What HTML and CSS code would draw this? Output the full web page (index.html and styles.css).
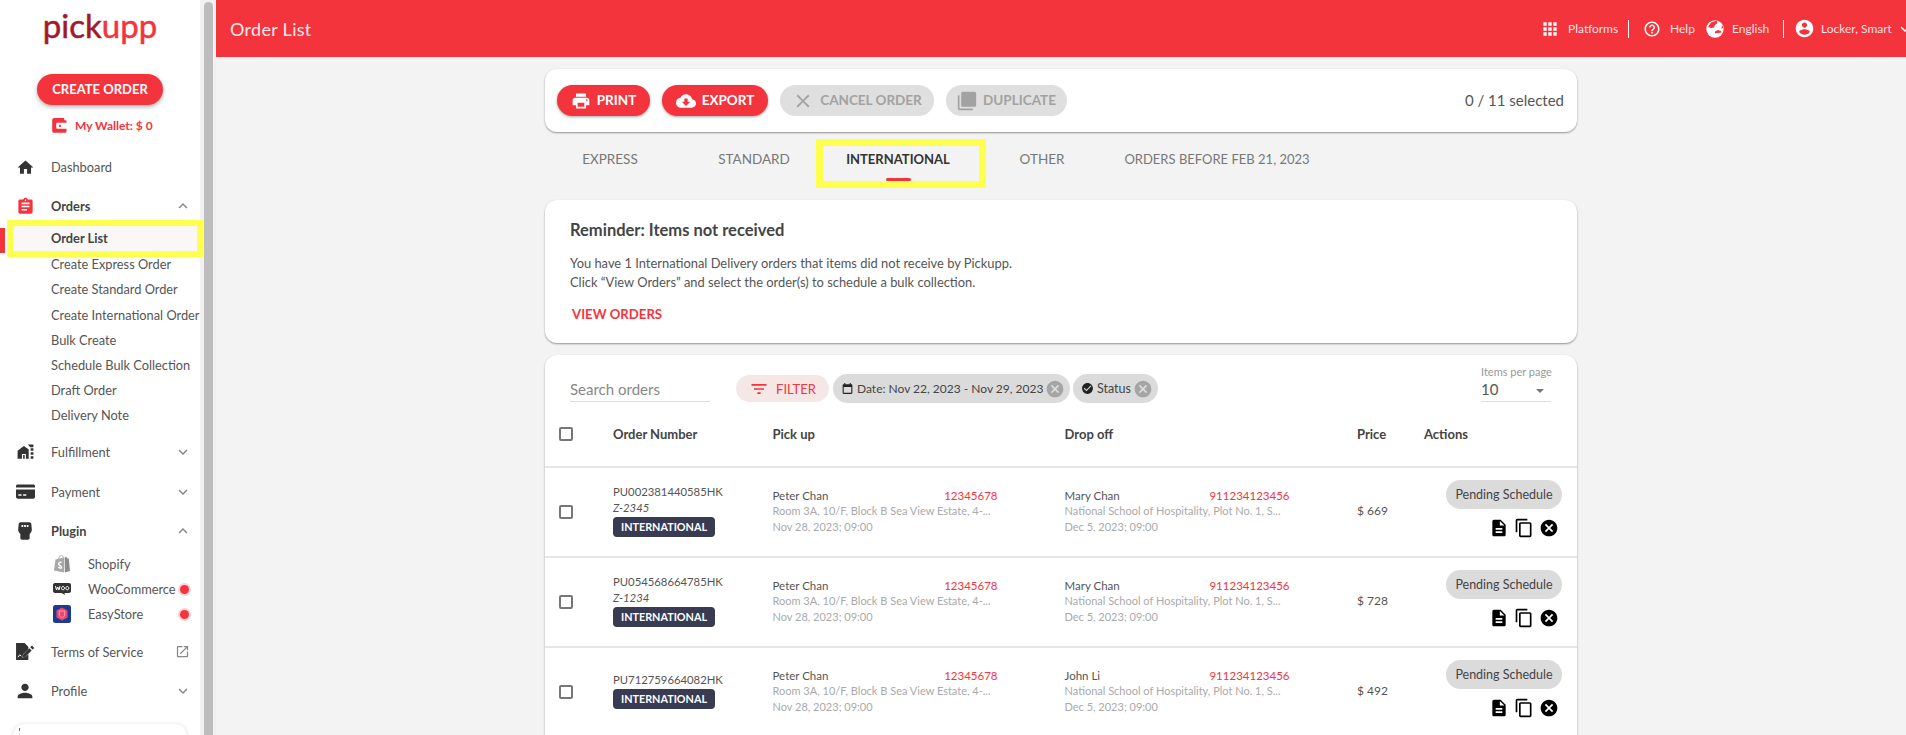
FILE: index.html
```html
<!DOCTYPE html>
<html lang="en">
<head>
<meta charset="utf-8">
<title>Order List</title>
<link rel="stylesheet" href="styles.css">
</head>
<body>
<svg class="defs" aria-hidden="true">
  <symbol id="i-home" viewBox="0 0 24 24"><path d="M10 20v-6h4v6h5v-8h3L12 3 2 12h3v8z"/></symbol>
  <symbol id="i-assign" viewBox="0 0 24 24"><path d="M19 3h-4.18C14.4 1.84 13.3 1 12 1c-1.3 0-2.4.84-2.82 2H5c-1.1 0-2 .9-2 2v14c0 1.1.9 2 2 2h14c1.1 0 2-.9 2-2V5c0-1.1-.9-2-2-2zm-7 0c.55 0 1 .45 1 1s-.45 1-1 1-1-.45-1-1 .45-1 1-1zm2 14H7v-2h7v2zm3-4H7v-2h10v2zm0-4H7V7h10v2z"/></symbol>
  <symbol id="i-up" viewBox="0 0 24 24"><path d="M12 8l-6 6 1.41 1.41L12 10.83l4.59 4.58L18 14z"/></symbol>
  <symbol id="i-down" viewBox="0 0 24 24"><path d="M16.59 8.59L12 13.17 7.41 8.59 6 10l6 6 6-6z"/></symbol>
  <symbol id="i-person" viewBox="0 0 24 24"><path d="M12 12c2.21 0 4-1.79 4-4s-1.79-4-4-4-4 1.79-4 4 1.79 4 4 4zm0 2c-2.67 0-8 1.34-8 4v2h16v-2c0-2.66-5.33-4-8-4z"/></symbol>
  <symbol id="i-open" viewBox="0 0 24 24"><path d="M19 19H5V5h7V3H5c-1.11 0-2 .9-2 2v14c0 1.1.89 2 2 2h14c1.1 0 2-.9 2-2v-7h-2v7zM14 3v2h3.59l-9.83 9.83 1.41 1.41L19 6.41V10h2V3h-7z"/></symbol>
  <symbol id="i-print" viewBox="0 0 24 24"><path d="M19 8H5c-1.66 0-3 1.34-3 3v6h4v4h12v-4h4v-6c0-1.66-1.34-3-3-3zm-3 11H8v-5h8v5zm3-7c-.55 0-1-.45-1-1s.45-1 1-1 1 .45 1 1-.45 1-1 1zm-1-9H6v4h12V3z"/></symbol>
  <symbol id="i-cloud" viewBox="0 0 24 24"><path d="M19.35 10.04C18.67 6.59 15.64 4 12 4 9.11 4 6.6 5.64 5.35 8.04 2.34 8.36 0 10.91 0 14c0 3.31 2.69 6 6 6h13c2.76 0 5-2.24 5-5 0-2.64-2.05-4.78-4.65-4.96zM17 13l-5 5-5-5h3V9h4v4h3z"/></symbol>
  <symbol id="i-close" viewBox="0 0 24 24"><path d="M19 6.41L17.59 5 12 10.59 6.41 5 5 6.41 10.59 12 5 17.59 6.41 19 12 13.41 17.59 19 19 17.59 13.41 12z"/></symbol>
  <symbol id="i-dup" viewBox="0 0 24 24"><path d="M3 5H1v16c0 1.1.9 2 2 2h16v-2H3V5zm18-4H7c-1.1 0-2 .9-2 2v14c0 1.1.9 2 2 2h14c1.1 0 2-.9 2-2V3c0-1.1-.9-2-2-2z"/></symbol>
  <symbol id="i-filter" viewBox="0 0 24 24"><path d="M10 18h4v-2h-4v2zM3 6v2h18V6H3zm3 7h12v-2H6v2z"/></symbol>
  <symbol id="i-cal" viewBox="0 0 24 24"><path d="M19 4h-1V2h-2v2H8V2H6v2H5c-1.1 0-2 .9-2 2v14c0 1.1.9 2 2 2h14c1.1 0 2-.9 2-2V6c0-1.1-.9-2-2-2zm0 16H5V9h14v11z"/></symbol>
  <symbol id="i-check" viewBox="0 0 24 24"><path d="M12 2C6.48 2 2 6.48 2 12s4.48 10 10 10 10-4.48 10-10S17.52 2 12 2zm-2 15l-5-5 1.41-1.41L10 14.17l7.59-7.59L19 8l-9 9z"/></symbol>
  <symbol id="i-cancel" viewBox="0 0 24 24"><path d="M12 2C6.47 2 2 6.47 2 12s4.47 10 10 10 10-4.47 10-10S17.53 2 12 2zm5 13.59L15.59 17 12 13.41 8.41 17 7 15.59 10.59 12 7 8.41 8.41 7 12 10.59 15.59 7 17 8.41 13.41 12 17 15.59z"/></symbol>
  <symbol id="i-doc" viewBox="0 0 24 24"><path d="M14 2H6c-1.1 0-1.99.9-1.99 2L4 20c0 1.1.89 2 1.99 2H18c1.1 0 2-.9 2-2V8l-6-6zm2 16H8v-2h8v2zm0-4H8v-2h8v2zm-3-5V3.5L18.5 9H13z"/></symbol>
  <symbol id="i-copy" viewBox="0 0 24 24"><path d="M16 1H4c-1.1 0-2 .9-2 2v14h2V3h12V1zm3 4H8c-1.1 0-2 .9-2 2v14c0 1.1.9 2 2 2h11c1.1 0 2-.9 2-2V7c0-1.1-.9-2-2-2zm0 16H8V7h11v14z"/></symbol>
  <symbol id="i-help" viewBox="0 0 24 24"><path d="M11 18h2v-2h-2v2zm1-16C6.48 2 2 6.48 2 12s4.48 10 10 10 10-4.48 10-10S17.52 2 12 2zm0 18c-4.41 0-8-3.59-8-8s3.59-8 8-8 8 3.59 8 8-3.59 8-8 8zm0-14c-2.21 0-4 1.79-4 4h2c0-1.1.9-2 2-2s2 .9 2 2c0 2-3 1.75-3 5h2c0-2.25 3-2.5 3-5 0-2.21-1.79-4-4-4z"/></symbol>
  <symbol id="i-account" viewBox="0 0 24 24"><path d="M12 2C6.48 2 2 6.48 2 12s4.48 10 10 10 10-4.48 10-10S17.52 2 12 2zm0 3c1.66 0 3 1.34 3 3s-1.34 3-3 3-3-1.34-3-3 1.34-3 3-3zm0 14.2c-2.5 0-4.71-1.28-6-3.22.03-1.99 4-3.08 6-3.08 1.99 0 5.97 1.09 6 3.08-1.29 1.94-3.5 3.22-6 3.22z"/></symbol>
  <symbol id="i-apps" viewBox="0 0 24 24"><path d="M4 8h4V4H4v4zm6 12h4v-4h-4v4zm-6 0h4v-4H4v4zm0-6h4v-4H4v4zm6 0h4v-4h-4v4zm6-10v4h4V4h-4zm-6 4h4V4h-4v4zm6 6h4v-4h-4v4zm0 6h4v-4h-4v4z"/></symbol>
  <symbol id="i-wallet" viewBox="0 0 16 16"><path fill-rule="evenodd" d="M2.5 0H13v2.5h1.2c.9 0 1.3.5 1.3 1.3v10.4c0 1-.6 1.6-1.6 1.6H2.1C.9 15.8.2 15 .2 13.9V2.3C.2 1 1.1 0 2.5 0zM6 5C5 5 4.500 5.500 4.500 6.500v3.500c0 1 .5 1.500 1.500 1.500h9.500V5zM8.500 7.200a1.200 1.200 0 1 1 0 2.400 1.200 1.200 0 0 1 0-2.400z"/></symbol>
  <symbol id="i-ware" viewBox="0 0 24 24"><path d="M2 21V11l8-6 6 4.500V21h-3.500v-6h-5v6zM9 16.500h2V21H9zM15 3h7v3.500h-4zM18.500 8H22v3h-3.500zM18.500 13H22v3h-3.500zM18.500 18H22v3h-3.500z"/></symbol>
  <symbol id="i-card" viewBox="0 0 24 18"><path fill-rule="evenodd" d="M2 0h20c1.100 0 2 .9 2 2v1.800H0V2C0 .9.900 0 2 0zM0 6.500h24V16c0 1.100-.9 2-2 2H2c-1.100 0-2-.9-2-2zM3 12.500v2h4v-2zM9 12.500v2h4v-2z"/></symbol>
  <symbol id="i-plug" viewBox="0 0 16 20"><path fill-rule="evenodd" d="M3 0h10c1.200 0 2 .8 2.200 2l.6 6c.1 1.500-.4 2.800-1.300 4l-1.200 1.500V18c0 1.100-.9 2-2 2H4.700c-1.100 0-2-.9-2-2v-4.500L1.500 12C.6 10.800.1 9.500.2 8l.6-6C1 .800 1.800 0 3 0zM4 3v2.500h2V3zM7 3v2.500h2V3zM10 3v2.500h2V3z"/></symbol>
  <symbol id="i-terms" viewBox="0 0 20 18"><path d="M0 0h9l4 4v2.500L7.500 12l-1 3.500 3.700-1L13 12v6H0z"/><path d="M14 5.500l2.500 2.500-6.800 6.800-3 .7.700-3zM15 4.500l1.300-1.300c.3-.3.700-.3 1 0l1.500 1.500c.3.3.3.7 0 1L17.500 7z"/><path d="M2 15l2-2.500 1.500 1.500" fill="none" stroke="#fff" stroke-width="1"/></symbol>
  <symbol id="i-shop" viewBox="0 0 16 18"><path d="M11 2.200 12 2c.3 0 .4.100.5.300l1 1.100 1.300.2L16 16l-5 1.500z" fill="#8c8c8c"/><path d="M10.500 2.300 1.500 4.500 0 15.500l10.300 2z" fill="#a8a8a8"/><path d="M4 5.500C4.300 3 5.700.5 7.500.5c1.200 0 1.800 1.100 2 2.500" fill="none" stroke="#a8a8a8" stroke-width=".9"/><path d="M7.500 7.500C6.500 7 4.700 7.300 4.700 9c0 1.700 2.800 1.800 2.800 3.300 0 1.200-1.700 1.200-3-.2" fill="none" stroke="#fff" stroke-width="1.400"/></symbol>
  <symbol id="i-woo" viewBox="0 0 18 12"><path d="M2 0h14c1.100 0 2 .9 2 2v6c0 1.100-.9 2-2 2h-4.500l.5 2-3.500-2H2c-1.100 0-2-.9-2-2V2C0 .9.900 0 2 0z" fill="#333"/><path d="M2.500 3l1 4 1.300-3 1.200 3 1-4M10 3.500a1.500 1.700 0 1 0 .01 0M14.300 3.500a1.500 1.700 0 1 0 .01 0" fill="none" stroke="#fff" stroke-width="1"/></symbol>
  <symbol id="i-easy" viewBox="0 0 18 18"><rect width="18" height="18" rx="2.500" fill="#1c3a8f"/><path d="M9 2.500l5.500 3v7L9 15.500l-5.500-3v-7z" fill="#f0466e"/><path d="M6.300 6h5.400v4.500c0 1-1 1.700-2.700 1.700s-2.700-.7-2.700-1.700z" fill="none" stroke="#ffb0c0" stroke-width=".8"/></symbol>
</svg>

<div class="app">
  <aside class="side">
    <div class="side-inner">
      <div class="logo"><span class="logo-a">pick</span><span class="logo-b">upp</span></div>
      <button class="create-btn"><span>CREATE ORDER</span></button>
      <div class="wallet"><svg class="wallet-icon"><use href="#i-wallet"/></svg><span>My Wallet: $ 0</span></div>
      <nav class="nav">
        <div class="nav-row"><span class="nav-ico"><svg class="ic18"><use href="#i-home"/></svg></span><span>Dashboard</span></div>
        <div class="group">
          <div class="nav-row nav-open"><span class="nav-ico red"><svg class="ic18"><use href="#i-assign"/></svg></span><span>Orders</span><svg class="chev"><use href="#i-up"/></svg></div>
          <div class="sub-list">
            <div class="sub-item active">Order List</div>
            <div class="sub-item">Create Express Order</div>
            <div class="sub-item">Create Standard Order</div>
            <div class="sub-item">Create International Order</div>
            <div class="sub-item">Bulk Create</div>
            <div class="sub-item">Schedule Bulk Collection</div>
            <div class="sub-item">Draft Order</div>
            <div class="sub-item">Delivery Note</div>
          </div>
        </div>
        <div class="nav-row"><span class="nav-ico"><svg class="ic18"><use href="#i-ware"/></svg></span><span>Fulfillment</span><svg class="chev"><use href="#i-down"/></svg></div>
        <div class="nav-row nav-pay"><span class="nav-ico"><svg class="ic-card"><use href="#i-card"/></svg></span><span>Payment</span><svg class="chev"><use href="#i-down"/></svg></div>
        <div class="group">
          <div class="nav-row nav-open"><span class="nav-ico"><svg class="ic-plug"><use href="#i-plug"/></svg></span><span>Plugin</span><svg class="chev"><use href="#i-up"/></svg></div>
          <div class="plugin-list">
            <div class="plugin"><svg class="plug-logo"><use href="#i-shop"/></svg><span>Shopify</span></div>
            <div class="plugin"><svg class="plug-logo"><use href="#i-woo"/></svg><span>WooCommerce</span><i class="dot"></i></div>
            <div class="plugin"><svg class="plug-logo"><use href="#i-easy"/></svg><span>EasyStore</span><i class="dot"></i></div>
          </div>
        </div>
        <div class="nav-row"><span class="nav-ico"><svg class="ic-terms"><use href="#i-terms"/></svg></span><span>Terms of Service</span><svg class="chev chev-open"><use href="#i-open"/></svg></div>
        <div class="nav-row"><span class="nav-ico"><svg class="ic-person"><use href="#i-person"/></svg></span><span>Profile</span><svg class="chev"><use href="#i-down"/></svg></div>
      </nav>
      <div class="side-card"></div>
    </div>
    <div class="scroll"><div class="thumb"></div></div>
  </aside>

  <div class="main">
    <header class="topbar">
      <h1 class="title">Order List</h1>
      <div class="top-right">
        <svg class="top-apps"><use href="#i-apps"/></svg><span class="t-plat">Platforms</span><i class="sep s1"></i>
        <svg class="top-ic"><use href="#i-help"/></svg><span class="t-help">Help</span>
        <svg class="globe" viewBox="0 0 18 18"><circle cx="9" cy="9" r="8.700" fill="#fff"/><path d="M10.500.5l1 2.500-2.500 2-1 2.500-3 .5-3-1L5 2.500zM9 11.500l3-1.500 3 1 .5 1.500-3 .5-3.500.3zM16 5l1.500 3-2 .5z" fill="#f4343c"/></svg><span class="t-eng">English</span><i class="sep s2"></i>
        <svg class="top-ic2"><use href="#i-account"/></svg><span class="t-user">Locker, Smart</span>
        <svg class="top-chev"><use href="#i-down"/></svg>
      </div>
    </header>

    <div class="content">
      <section class="card toolbar">
        <button class="btn btn-red w-print"><svg><use href="#i-print"/></svg><span>PRINT</span></button>
        <button class="btn btn-red w-export"><svg><use href="#i-cloud"/></svg><span>EXPORT</span></button>
        <button class="btn btn-off w-cancel"><svg class="b-x"><use href="#i-close"/></svg><span>CANCEL ORDER</span></button>
        <button class="btn btn-off w-dup"><svg><use href="#i-dup"/></svg><span>DUPLICATE</span></button>
        <span class="selected">0 / 11 selected</span>
      </section>

      <div class="tabs">
        <div class="tab">EXPRESS</div>
        <div class="tab">STANDARD</div>
        <div class="tab tab-active">INTERNATIONAL</div>
        <div class="tab">OTHER</div>
        <div class="tab tab-wide">ORDERS BEFORE FEB 21, 2023</div>
      </div>

      <section class="card reminder">
        <h2 class="rem-title">Reminder: Items not received</h2>
        <p class="rem-text">You have 1 International Delivery orders that items did not receive by Pickupp.<br>Click “View Orders” and select the order(s) to schedule a bulk collection.</p>
        <div class="rem-link">VIEW ORDERS</div>
      </section>

      <section class="card list">
        <div class="list-bar">
          <div class="search">Search orders</div>
          <div class="filter"><svg><use href="#i-filter"/></svg>FILTER</div>
          <div class="chip chip-date"><svg class="chip-ic"><use href="#i-cal"/></svg><span>Date: Nov 22, 2023 - Nov 29, 2023</span><svg class="chip-x"><use href="#i-cancel"/></svg></div>
          <div class="chip chip-status"><svg class="chip-ic"><use href="#i-check"/></svg><span>Status</span><svg class="chip-x"><use href="#i-cancel"/></svg></div>
          <div class="per-page">
            <div class="pp-label">Items per page</div>
            <div class="pp-val"><span>10</span><i class="pp-arrow"></i></div>
          </div>
        </div>

        <div class="tr th">
          <span class="cb"></span><span>Order Number</span><span>Pick up</span><span>Drop off</span><span>Price</span><span>Actions</span>
        </div>

        <div class="tr row">
          <span class="cb"></span>
          <div class="ord"><div>PU002381440585HK</div><div class="ref">Z-2345</div><div class="badge">INTERNATIONAL</div></div>
          <div class="addr"><div class="who"><span>Peter Chan</span><span class="phone">12345678</span></div><div class="muted">Room 3A, 10/F, Block B Sea View Estate, 4-...</div><div class="muted">Nov 28, 2023; 09:00</div></div>
          <div class="addr"><div class="who"><span>Mary Chan</span><span class="phone">911234123456</span></div><div class="muted">National School of Hospitality, Plot No. 1, S...</div><div class="muted">Dec 5, 2023; 09:00</div></div>
          <div class="price">$ 669</div>
          <div class="acts"><div class="pill">Pending Schedule</div><div class="act-ics"><svg class="a-ic"><use href="#i-doc"/></svg><svg class="a-ic"><use href="#i-copy"/></svg><svg class="a-ic"><use href="#i-cancel"/></svg></div></div>
        </div>

        <div class="tr row">
          <span class="cb"></span>
          <div class="ord"><div>PU054568664785HK</div><div class="ref">Z-1234</div><div class="badge">INTERNATIONAL</div></div>
          <div class="addr"><div class="who"><span>Peter Chan</span><span class="phone">12345678</span></div><div class="muted">Room 3A, 10/F, Block B Sea View Estate, 4-...</div><div class="muted">Nov 28, 2023; 09:00</div></div>
          <div class="addr"><div class="who"><span>Mary Chan</span><span class="phone">911234123456</span></div><div class="muted">National School of Hospitality, Plot No. 1, S...</div><div class="muted">Dec 5, 2023; 09:00</div></div>
          <div class="price">$ 728</div>
          <div class="acts"><div class="pill">Pending Schedule</div><div class="act-ics"><svg class="a-ic"><use href="#i-doc"/></svg><svg class="a-ic"><use href="#i-copy"/></svg><svg class="a-ic"><use href="#i-cancel"/></svg></div></div>
        </div>

        <div class="tr row">
          <span class="cb"></span>
          <div class="ord"><div>PU712759664082HK</div><div class="badge">INTERNATIONAL</div></div>
          <div class="addr"><div class="who"><span>Peter Chan</span><span class="phone">12345678</span></div><div class="muted">Room 3A, 10/F, Block B Sea View Estate, 4-...</div><div class="muted">Nov 28, 2023; 09:00</div></div>
          <div class="addr"><div class="who"><span>John Li</span><span class="phone">911234123456</span></div><div class="muted">National School of Hospitality, Plot No. 1, S...</div><div class="muted">Dec 5, 2023; 09:00</div></div>
          <div class="price">$ 492</div>
          <div class="acts"><div class="pill">Pending Schedule</div><div class="act-ics"><svg class="a-ic"><use href="#i-doc"/></svg><svg class="a-ic"><use href="#i-copy"/></svg><svg class="a-ic"><use href="#i-cancel"/></svg></div></div>
        </div>
      </section>
    </div>
  </div>
</div>
</body>
</html>
```

FILE: styles.css
```css
*, *::before, *::after { box-sizing: border-box; }
html, body { margin: 0; height: 100%; overflow: hidden; }
body { font-family: Lato, "Noto Sans", sans-serif; color: #444; background: #f3f3f3; font-size: 13px; }
svg { fill: currentColor; display: block; flex: none; }
.defs { position: absolute; width: 0; height: 0; }
.app { display: flex; height: 735px; overflow: hidden; }

/* sidebar */
.side { width: 216px; flex: none; display: flex; height: 100%; background: #fff; overflow: hidden; }
.side-inner { width: 200px; flex: none; background: #fff; position: relative; }
.scroll { width: 16px; flex: none; padding: 2px 3px 0 4px; background: #f1f1f1; }
.thumb { width: 9px; height: 900px; background: #bdbdbd; border-radius: 5px; }
.logo { height: 60px; padding-top: 2px; text-align: center; font-size: 33px; font-weight: 400; line-height: 46px; -webkit-text-stroke: .5px currentColor; }
.logo-a { color: #a01a2c; }
.logo-b { color: #f4343c; }
.create-btn { display: block; margin: 14px auto 0; width: 126px; height: 31px; border: 0; border-radius: 16px; background: #f4343c; color: #fff; font: 700 13px Lato, sans-serif; box-shadow: 0 2px 4px rgba(0,0,0,.3); padding: 0 0 2px; }
.wallet { display: flex; align-items: center; height: 18px; margin: 11px 0 0 52px; color: #f4343c; font-size: 12px; font-weight: 700; gap: 8px; }
.wallet-icon { width: 15px; height: 15px; }
.nav { display: flex; flex-direction: column; gap: 13px; margin-top: 20px; }
.nav-row { display: flex; align-items: center; height: 26px; padding-left: 16px; color: #555; font-size: 12.800px; }
.nav-pay { margin-top: 1px; }
.nav-open { font-weight: 700; color: #444; }
.nav-ico { width: 35px; flex: none; display: flex; color: #333; }
.nav-ico.red { color: #f4343c; }
.ic18 { width: 19px; height: 19px; }
.ic-card { width: 19px; height: 15px; }
.ic-terms { width: 19px; height: 17px; }
.ic-plug { width: 14px; height: 18px; margin-left: 2px; }
.ic-person { width: 22px; height: 22px; margin-left: -2px; }
.chev { width: 18px; height: 18px; margin-left: auto; margin-right: 8px; color: #888; }
.chev-open { width: 15px; height: 15px; margin-right: 10px; }
.sub-list { margin: 8px 0 -3px; }
.sub-item { height: 25.200px; line-height: 25.200px; padding-left: 51px; font-size: 12.800px; color: #555; white-space: nowrap; }
.sub-item.active { position: relative; margin: -1px 3px 1px 13px; padding-left: 38px; background: #faf7f7; font-weight: 700; color: #444; outline: 6px solid #ffff4d; }
.sub-item.active::before { content: ""; position: absolute; left: -13px; top: 2px; width: 5px; height: 25px; background: #f4343c; }
.plugin-list { margin: 8px 0 -1px; }
.plugin { display: flex; align-items: center; height: 25px; padding-left: 53px; font-size: 12.800px; color: #555; position: relative; }
.plug-logo { width: 18px; height: 18px; margin-right: 17px; }
.dot { position: absolute; left: 180px; top: 8px; width: 9px; height: 9px; border-radius: 50%; background: #f4343c; box-shadow: 0 0 0 2px #fad4d6; }
.side-card { margin: 20px 13px 0; height: 120px; border-radius: 12px; background: #fff; box-shadow: 0 0 4px rgba(0,0,0,.12); position: relative; }
.side-card::before { content: ""; position: absolute; left: 6px; top: 4px; width: 1px; height: 3px; background: #f4343c; }

/* main */
.main { flex: 1; min-width: 0; display: flex; flex-direction: column; overflow: hidden; }
.topbar { height: 57px; flex: none; background: #f4343c; color: #fff; display: flex; align-items: center; }
.title { margin: 0 0 0 14px; font-size: 18px; font-weight: 400; color: rgba(255,255,255,.92); letter-spacing: .3px; }
.top-right { margin-left: auto; display: flex; align-items: center; margin-right: -8px; font-size: 12px; color: rgba(255,255,255,.88); }
.top-apps { width: 20px; height: 20px; margin-right: 8px; color: #fff; }
.t-plat { width: 48px; white-space: nowrap; }
.sep { width: 1px; height: 18px; background: #fff; }
.s1 { margin: 0 14px 0 12px; }
.s2 { margin: 0 10px 0 12px; }
.top-ic { width: 18px; height: 18px; margin-right: 9px; color: #fff; }
.t-help { width: 24px; }
.globe { width: 18px; height: 18px; margin: 0 8px 0 12px; }
.t-eng { width: 39px; }
.top-ic2 { width: 21px; height: 21px; margin-right: 6px; color: #fff; }
.t-user { width: 69px; white-space: nowrap; }
.top-chev { width: 18px; height: 18px; margin-left: 6px; color: #fff; }

.content { width: 1032px; margin: 12px auto 0; }
.card { background: #fff; border-radius: 12px; box-shadow: 0 1px 2px rgba(0,0,0,.4); }
.toolbar { height: 63px; display: flex; align-items: center; gap: 12px; padding: 0 12px; }
.btn { height: 31px; border: 0; border-radius: 16px; display: flex; align-items: center; justify-content: center; gap: 6px; padding: 0; font: 700 13.500px Lato, sans-serif; }
.btn span { padding-bottom: 2px; }
.btn svg { width: 20px; height: 20px; }
.btn .b-x { width: 22px; height: 22px; }
.btn-red { background: #f4343c; color: #fff; box-shadow: 0 1px 3px rgba(0,0,0,.35); }
.btn-off { background: #dfdfdf; color: #a2a2a2; }
.w-print { width: 93px; }
.w-export { width: 106px; }
.w-cancel { width: 154px; }
.w-dup { width: 121px; }
.selected { margin-left: auto; margin-right: 1px; padding-bottom: 2px; font-size: 15px; color: #555; }

.tabs { display: flex; height: 58px; margin-left: -7px; }
.tab { width: 144px; text-align: center; font-size: 13.500px; line-height: 54px; color: #777; position: relative; white-space: nowrap; }
.tab-wide { width: 206px; font-size: 13px; }
.tab-active { color: #333; font-weight: 700; font-size: 13px; }
.tab-active::before { content: ""; position: absolute; left: -10px; right: -16px; top: 7px; height: 49px; border: 7px solid #ffff4d; }
.tab-active::after { content: ""; position: absolute; left: 60px; top: 46px; width: 25px; height: 3px; border-radius: 2px; background: #f4343c; }

.reminder { margin-top: 10px; height: 143px; padding: 19px 25px; }
.rem-title { margin: 0; font-size: 16.500px; line-height: 22px; font-weight: 700; color: #444; }
.rem-text { margin: 13px 0 0; font-size: 12.900px; line-height: 19px; color: #555; }
.rem-link { margin: 12px 0 0 2px; font-size: 13.200px; line-height: 20px; font-weight: 700; color: #f4343c; }

.list { margin-top: 12px; height: 500px; }
.list-bar { height: 48px; display: flex; align-items: flex-end; padding: 0 26px 0 25px; }
.search { width: 140px; height: 28px; border-bottom: 1px solid #ddd; font-size: 15px; color: #888; line-height: 30px; margin-bottom: 1px; }
.filter { width: 93px; height: 27px; margin: 0 0 1px 26px; border-radius: 14px; background: #f6e7e7; color: #f4343c; display: flex; align-items: center; justify-content: center; gap: 7px; font-size: 13px; }
.filter svg { width: 20px; height: 20px; }
.chip { height: 29px; border-radius: 15px; background: #dbdbdb; display: flex; align-items: center; color: #444; font-size: 12.500px; white-space: nowrap; }
.chip-date { width: 237px; margin-left: 4px; padding-left: 8px; font-size: 12px; }
.chip-status { width: 85px; margin-left: 3px; padding-left: 8px; }
.chip-ic { width: 13px; height: 13px; margin-right: 3px; color: #222; }
.chip-x { width: 20px; height: 20px; margin-left: auto; margin-right: 5px; color: #a5a5a5; }
.per-page { margin-left: auto; width: 70px; height: 36px; border-bottom: 1px solid #ddd; margin-bottom: 1px; }
.pp-label { font-size: 11px; line-height: 12px; color: #999; white-space: nowrap; }
.pp-val { display: flex; align-items: center; justify-content: space-between; font-size: 15px; line-height: 22px; color: #555; padding-right: 7px; }
.pp-arrow { width: 0; height: 0; border: 4px solid transparent; border-top: 4px solid #777; border-bottom: 0; margin-top: 4px; }

.tr { display: grid; grid-template-columns: 68px 159.500px 292px 292.500px 67px 1fr; align-items: center; }
.cb { width: 14px; height: 14px; margin-left: 14px; border: 2px solid #777; border-radius: 2px; }
.th { height: 63px; padding-bottom: 2px; font-size: 13px; font-weight: 700; color: #444; }
.row { height: 90px; border-top: 2px solid #e6e6e6; font-size: 11.500px; color: #555; }
.ord { line-height: 16px; margin-bottom: 3px; font-size: 11.300px; }
.ref { font-style: italic; }
.badge { width: 102px; height: 20px; margin-top: 1px; border-radius: 4px; background: #383b52; color: #fff; font-size: 10.800px; font-weight: 700; line-height: 20px; text-align: center; }
.addr { width: 225px; line-height: 15.500px; margin-bottom: 2px; }
.who { display: flex; justify-content: space-between; }
.phone { color: #f4343c; }
.muted { color: #aaa; white-space: nowrap; font-size: 11px; }
.price { font-size: 12px; padding-bottom: 4px; }
.acts { display: flex; flex-direction: column; align-items: flex-end; padding-right: 15px; margin-bottom: 6px; }
.pill { width: 116px; height: 29px; border-radius: 15px; background: #dbdbdb; font-size: 12.500px; line-height: 29px; text-align: center; color: #444; white-space: nowrap; }
.act-ics { display: flex; align-items: center; margin-top: 9px; padding-right: 3px; color: #000; gap: 5px; }
.a-ic { width: 20px; height: 20px; }
```
